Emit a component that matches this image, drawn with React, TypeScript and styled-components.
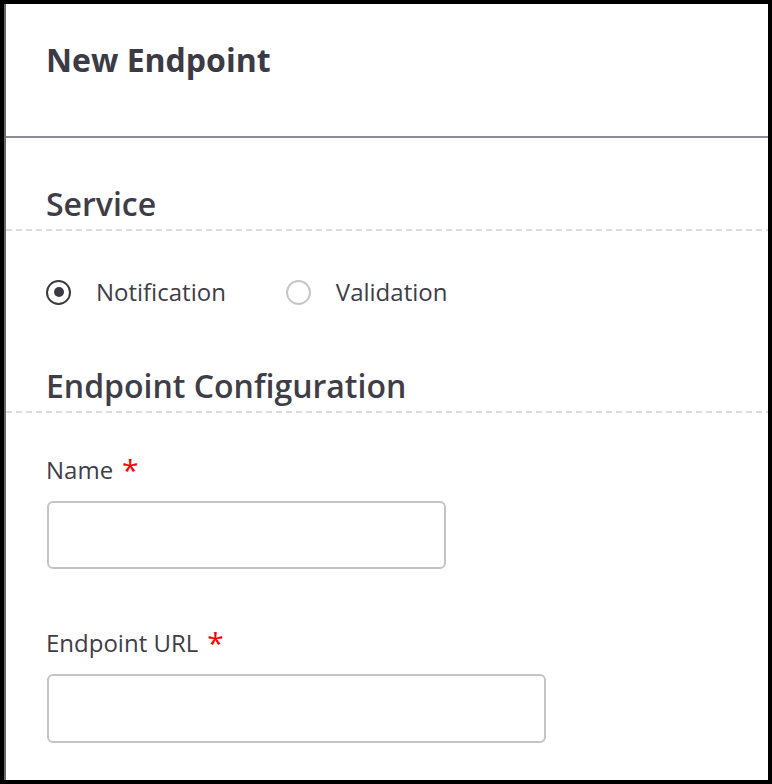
import React, { useState } from 'react';
import styled, { createGlobalStyle } from 'styled-components';

const GlobalStyle = createGlobalStyle`
  html, body {
    margin: 0;
    padding: 0;
    background: #000;
  }
  body {
    font-family: "Open Sans", "Noto Sans", Arial, sans-serif;
    color: #3e3d48;
  }
  * {
    box-sizing: border-box;
  }
`;

const Frame = styled.div`
  padding: 4px;
  width: 772px;
  height: 784px;
`;

const Panel = styled.div`
  height: 776px;
  background: #fff;
  border-left: 2px solid #686868;
  overflow: hidden;
`;

const Header = styled.header`
  height: 134px;
  padding: 38px 0 0 40px;
  border-bottom: 2px solid #8b8a95;
`;

const Title = styled.h1`
  margin: 0;
  font-size: 32px;
  line-height: 36px;
  font-weight: 700;
  color: #3b3a45;
`;

const SectionTitle = styled.h2<{ $top: number }>`
  margin: ${p => p.$top}px 0 0;
  padding: 0 0 7px 40px;
  font-size: 32px;
  line-height: 40px;
  font-weight: 600;
  color: #3e3d48;
  background: linear-gradient(to right, #dcdcdc 65%, transparent 0) left bottom / 10px 2px repeat-x;
`;

const Body = styled.div`
  padding: 0 0 0 40px;
`;

const RadioRow = styled.div`
  display: flex;
  align-items: center;
  gap: 60px;
  margin-top: 45px;
  height: 32px;
`;

const RadioOption = styled.label`
  display: flex;
  align-items: center;
  gap: 25px;
  font-size: 24px;
  line-height: 32px;
  color: #3e3d48;
  cursor: pointer;
`;

const RadioCircle = styled.span<{ $checked: boolean }>`
  width: 25px;
  height: 25px;
  border-radius: 50%;
  border: 2px solid ${p => (p.$checked ? '#3a3944' : '#c6c6c6')};
  display: flex;
  align-items: center;
  justify-content: center;

  &::after {
    content: '';
    width: 10px;
    height: 10px;
    border-radius: 50%;
    background: #3a3944;
    display: ${p => (p.$checked ? 'block' : 'none')};
  }
`;

const FieldLabel = styled.div<{ $top: number }>`
  margin-top: ${p => p.$top}px;
  font-size: 24px;
  line-height: 32px;
  color: #3e3d48;
`;

const Required = styled.span`
  color: #ff0000;
  font-size: 30px;
  line-height: 0;
  margin-left: 9px;
  position: relative;
  top: 2px;
`;

const TextInput = styled.input<{ $width: number; $height: number }>`
  display: block;
  margin: 15px 0 0 1px;
  width: ${p => p.$width}px;
  height: ${p => p.$height}px;
  border: 2px solid #c4c4c4;
  border-radius: 6px;
  background: #fff;
  font-family: inherit;
  font-size: 20px;
  padding: 0 14px;
  outline: none;
`;

export default function App() {
  const [service, setService] = useState('notification');

  return (
    <>
      <GlobalStyle />
      <Frame>
        <Panel>
          <Header>
            <Title>New Endpoint</Title>
          </Header>

          <SectionTitle $top={46}>Service</SectionTitle>
          <Body>
            <RadioRow>
              <RadioOption onClick={() => setService('notification')}>
                <RadioCircle $checked={service === 'notification'} />
                Notification
              </RadioOption>
              <RadioOption onClick={() => setService('validation')}>
                <RadioCircle $checked={service === 'validation'} />
                Validation
              </RadioOption>
            </RadioRow>
          </Body>

          <SectionTitle $top={58}>Endpoint Configuration</SectionTitle>
          <Body>
            <FieldLabel $top={41}>
              Name<Required>*</Required>
            </FieldLabel>
            <TextInput $width={399} $height={68} />
            <FieldLabel $top={58}>
              Endpoint URL<Required>*</Required>
            </FieldLabel>
            <TextInput $width={499} $height={69} />
          </Body>
        </Panel>
      </Frame>
    </>
  );
}
